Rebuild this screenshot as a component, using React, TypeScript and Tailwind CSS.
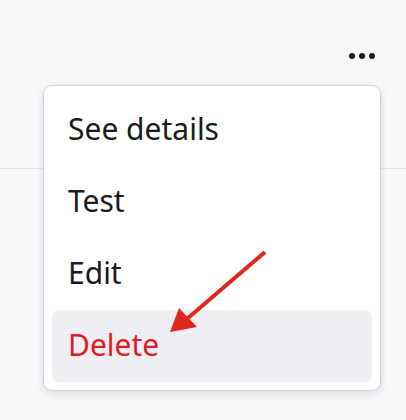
import { useState } from 'react'

const items = ['See details', 'Test', 'Edit', 'Delete']

export default function App() {
  const [active] = useState('Delete')

  return (
    <div className="relative h-[420px] w-[406px] overflow-hidden bg-[#f7f8fa] font-['Noto_Sans',sans-serif]">
      {/* header row with kebab */}
      <div className="flex h-[169px] items-start justify-end border-b border-[#e4e5ea] pr-[31px] pt-[53px]">
        <button className="flex items-center gap-[4px]">
          <span className="h-[6px] w-[6px] rounded-full bg-[#1a1a1a]" />
          <span className="h-[6px] w-[6px] rounded-full bg-[#1a1a1a]" />
          <span className="h-[6px] w-[6px] rounded-full bg-[#1a1a1a]" />
        </button>
      </div>

      {/* dropdown menu */}
      <div className="absolute left-[43px] top-[85px] w-[338px] rounded-[9px] border border-[#d3d4db] bg-white p-2 shadow-[0_3px_8px_rgba(20,20,40,0.12)]">
        {items.map((label) => (
          <div
            key={label}
            className={
              'flex h-[72px] items-center rounded-[8px] px-4 pb-1 text-[30px] ' +
              (label === active ? 'bg-[#efeff3] text-[#e01b24]' : 'text-[#1a1a1a]')
            }
          >
            {label}
          </div>
        ))}
      </div>

      {/* annotation arrow */}
      <svg className="absolute left-0 top-0" width="406" height="420" viewBox="0 0 406 420">
        <line x1="265" y1="252" x2="188" y2="318" stroke="#dc291b" strokeWidth="4" />
        <polygon points="170,332 179,308 197,327" fill="#dc291b" />
      </svg>
    </div>
  )
}
